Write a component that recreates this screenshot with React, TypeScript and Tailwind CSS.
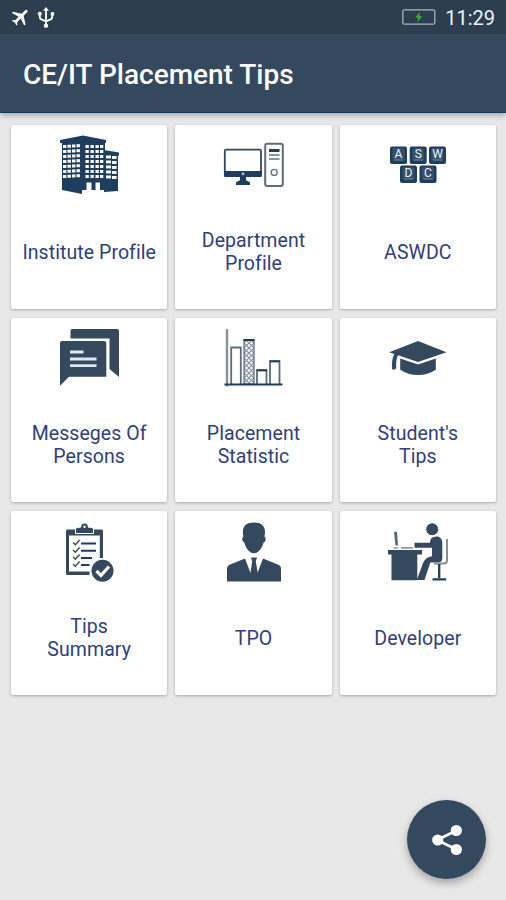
import type { ReactNode } from "react";

const NAVY = "#34495e";
const EDGE = "#1f3d5c";

function Building() {
  const rows = [20, 25, 30, 35, 40, 45, 50];
  return (
    <>
      <path d="M10 15 33 10.5 56 15v3H10z" fill={EDGE} />
      <path d="M12 17h20v52l-20-4z" fill={EDGE} />
      <path d="M31.5 17H55v48H31.5z" fill={EDGE} />
      <path d="M54 25l15 2.5v3h-1V66l-14 1z" fill={EDGE} />
      {rows.map((y) => (
        <g key={y} fill="#fff">
          {[13, 17.5, 22, 26.5].map((x) => (
            <rect key={x} x={x} y={y - (x - 13) * 0.06} width="3.4" height="3" />
          ))}
          {[35.5, 40.5, 45.5, 50].map((x) => (
            <rect key={x} x={x} y={y} width="3.3" height="3" />
          ))}
        </g>
      ))}
      {[31, 36, 41, 46, 51].map((y) => (
        <g key={y} fill="#fff">
          <rect x="56" y={y - 0.5} width="5" height="2.9" />
          <rect x="62" y={y} width="4.6" height="2.9" />
        </g>
      ))}
      <path d="M36.5 57.5h5V69h-5zM45.5 57.5H50V69h-4.5z" fill="#fff" />
    </>
  );
}

function Computer() {
  return (
    <>
      <rect x="10.8" y="24.6" width="36.2" height="26.4" rx="1.5" fill="#fff" stroke={NAVY} strokeWidth="1.8" />
      <path d="M10 46h38v4.5q0 1.5-1.5 1.5h-35Q10 52 10 50.5z" fill={EDGE} />
      <circle cx="29" cy="48.7" r="1.5" fill="#a5b5c5" />
      <path d="M26 52h6v3.2l4 2V60H22v-2.8l4-2z" fill={EDGE} />
      <rect x="51.2" y="18.8" width="17.6" height="42.2" rx="2" fill="#fff" stroke="#626a7b" strokeWidth="2" />
      <path d="M55 25.5h10.5" stroke={EDGE} strokeWidth="3" />
      <path d="M55 30h10.5M55 34h10.5" stroke="#8d959f" strokeWidth="2" />
      <circle cx="60.2" cy="47.4" r="3" fill="none" stroke="#667280" strokeWidth="1.4" />
    </>
  );
}

function Keyboard() {
  const keys = [
    ["A", 12, 21.5], ["S", 31.7, 21.5], ["W", 51, 21.5],
    ["D", 22, 40.5], ["C", 41.5, 40.5],
  ] as const;
  return (
    <>
      {keys.map(([letter, x, y]) => (
        <g key={letter}>
          <rect x={x} y={y} width="17" height="17.5" rx="2" fill={EDGE} />
          <rect x={x + 2.5} y={y + 1.5} width="12" height="12.5" rx="1.5" fill="#34506b" />
          <text x={x + 8.5} y={y + 11} textAnchor="middle" fontSize="12" fill="#eef4fa" className="font-[Roboto,sans-serif]">{letter}</text>
          <path d={`M${x + 4} ${y + 13.5}h9`} stroke="#8c9caf" strokeWidth=".8" />
        </g>
      ))}
    </>
  );
}

function Messages() {
  return (
    <>
      <path d="M22 11h45q2 0 2 2v46l-9.5-8V20.5H20.5V13q0-2 1.5-2z" fill={NAVY} />
      <path d="M12 23h42q2.3 0 2.3 2.3v33.5H19L10 67.7V25q0-2 2-2z" fill={NAVY} />
      <path d="M20 34h13.5M20 41h26.5M20 47.7h26.5" stroke="#dce8f4" strokeWidth="2.8" />
    </>
  );
}

function BarChart() {
  return (
    <>
      <defs>
        <pattern id="diamonds" width="5" height="5" patternUnits="userSpaceOnUse">
          <path d="M0 0l5 5M5 0L0 5" stroke="#8390a0" strokeWidth="1.2" />
        </pattern>
      </defs>
      <path d="M13 11v57.5" stroke="#8a929c" strokeWidth="2.5" />
      <path d="M17.2 66V29.5h9.6V66M43 66V52.5h9.5V66M56 66V43.5h9.5V66" fill="none" stroke="#5d6b7d" strokeWidth="1.8" />
      <path d="M30 22h10v44H30z" fill="url(#diamonds)" stroke="#53677b" strokeWidth="1.2" />
      <path d="M29.5 22h11M42.5 52.2h10.5M55.5 43.2H66" stroke={EDGE} strokeWidth="1.8" />
      <path d="M10.5 66.5h58" stroke={EDGE} strokeWidth="1.8" />
    </>
  );
}

function Cap() {
  return (
    <>
      <path d="M11.2 34.3 40 23l28.5 11.3L40 44 20 37.2Q17.8 41 18.2 49.5q0 2-2 2h-2Q13 43 16.2 35.9z" fill={NAVY} />
      <path d="M22.2 40.6 40 46.6l17.8-6v11.2Q50 57 40 57t-17.8-5.2z" fill={NAVY} />
    </>
  );
}

function Clipboard() {
  return (
    <>
      <path d="M17.5 18.5h34q1.5 0 1.5 1.5v27h-3.2V24.5H19v36h20.5v3.5h-22q-1.5 0-1.5-1.5V20q0-1.5 1.5-1.5z" fill={NAVY} />
      <path d="M25.5 22.5v-4q0-2.2 2.5-2.2h2.5q.5-4.3 4-4.3t4 4.3H41q2.5 0 2.5 2.2v4z" fill={NAVY} stroke="#fff" strokeWidth="1" />
      <circle cx="34.5" cy="15.7" r="1.2" fill="#fff" />
      {[32, 39.5, 46.5, 53.5].map((y) => (
        <path key={y} d={`m23 ${y - 0.5} 2.4 2.3 4.2-4.8`} fill="none" stroke={NAVY} strokeWidth="1.4" />
      ))}
      <path d="M31 32.5h15M31 39.8h15M31 47h11M31 54h8.5" stroke={EDGE} strokeWidth="2" />
      <circle cx="52.5" cy="59.7" r="12.5" fill="#fff" />
      <circle cx="52.5" cy="59.7" r="11" fill={NAVY} />
      <path d="m46.5 60 4.5 4.5 8-9" fill="none" stroke="#fff" strokeWidth="3.2" />
    </>
  );
}

function Businessman() {
  return (
    <>
      <path d="M40 11.5c7 0 11 3 11 9.5 0 2-.4 3.5-.4 5 1.6 0 1.3 5.2-1 5.5C48.2 37 44.5 42.3 40 42.3S31.6 37 30.3 31.5c-2.3-.3-2.6-5.5-1-5.5 0-1.5-.4-3-.4-5 0-6.5 4-9.5 11.1-9.5z" fill={NAVY} />
      <path d="M31 47.5 36.5 62h7L49 47.5 65 54q2 1 2 3.5V70.5H13V57.5Q13 55 15 54z" fill={NAVY} />
      <path d="M37 46.5h6l-1.2 4 2 11.5h-7.4l1.8-11.5z" fill={NAVY} />
    </>
  );
}

function DeskWorker() {
  return (
    <>
      <path d="M10 39h34v4.5h-4.7v25.8H13.5V43.5H10z" fill={NAVY} />
      <path d="m16 21 3-.3 1 13.8h-2.5z" fill="#54677a" />
      <path d="M15.5 37h4.8M23 36.8h12" stroke="#8e9aa7" strokeWidth="1.7" />
      <circle cx="54.2" cy="18.3" r="6" fill={NAVY} />
      <path d="M60 25.5q4.3 1.5 4.3 7V47q0 4.5-4.5 4.5h-7.5L46.5 69H38.8L45 52q2.3-5.7 9-6.8v-8.5H36.5v-5H52q0-7 8-6.2z" fill={NAVY} />
      <path d="M69 28v21.5q0 3-3 3H56" fill="none" stroke="#858e99" strokeWidth="2" />
      <path d="M61.2 53v14M54.5 68.3h13.7" stroke={EDGE} strokeWidth="2.3" />
    </>
  );
}

const tiles: { label: string[]; icon: ReactNode }[] = [
  { label: ["Institute Profile"], icon: <Building /> },
  { label: ["Department", "Profile"], icon: <Computer /> },
  { label: ["ASWDC"], icon: <Keyboard /> },
  { label: ["Messeges Of", "Persons"], icon: <Messages /> },
  { label: ["Placement", "Statistic"], icon: <BarChart /> },
  { label: ["Student's", "Tips"], icon: <Cap /> },
  { label: ["Tips", "Summary"], icon: <Clipboard /> },
  { label: ["TPO"], icon: <Businessman /> },
  { label: ["Developer"], icon: <DeskWorker /> },
];

function Tile({ label, icon }: { label: string[]; icon: ReactNode }) {
  return (
    <button className="flex h-[184.5px] flex-col items-center rounded-[2px] bg-white shadow-[0_1px_3px_rgba(0,0,0,0.28)]">
      <svg viewBox="0 0 80 80" className="ml-px size-20 shrink-0">{icon}</svg>
      <span className="flex h-[97px] flex-col items-center justify-center text-[19.5px] leading-[22.7px] tracking-[0.07px] whitespace-nowrap text-[#2f407c]">
        {label.map((line) => <span key={line}>{line}</span>)}
      </span>
    </button>
  );
}

export default function App() {
  return (
    <div className="relative h-[900px] w-[506px] overflow-hidden bg-[#e8e8e8] font-[Roboto,sans-serif]">
      <header className="h-[113px] border-b border-[#173a5c] bg-[#34495e] text-white shadow-[0_1px_7px_rgba(0,0,0,0.4)]">
        <div className="flex h-[34px] items-center bg-[#2c3e50] pr-[11px] pl-[10px]">
          <svg viewBox="0 0 24 24" className="size-[22px] rotate-45" fill="#fff">
            <path d="M21 16v-2l-8-5V3.5a1.5 1.5 0 0 0-3 0V9l-8 5v2l8-2.5V19l-2 1.5V22l3.5-1 3.5 1v-1.5L13 19v-5.5z" />
          </svg>
          <svg viewBox="0 0 20 24" className="ml-[4px] h-[23px] w-5" fill="none" stroke="#fff" strokeWidth="1.9">
            <path d="M10 4v17M3.5 8v3q0 3 3 3.5L10 16M16.5 8v3q0 3-3 3.5L10 16" />
            <path d="m10 1 3 4H7zM15 6.5h3.5v3.5H15z" fill="#fff" stroke="none" />
            <circle cx="3.5" cy="8" r="2.1" fill="#fff" stroke="none" />
            <circle cx="10" cy="20.5" r="2.3" fill="#fff" stroke="none" />
          </svg>
          <svg viewBox="0 0 34 16" className="ml-auto h-4 w-[34px]">
            <rect x=".8" y=".8" width="32" height="14.4" rx="1.5" fill="none" stroke="#a9b4bf" strokeWidth="1.3" />
            <path d="m18.3 2.5-5 6h3l-1.3 5 5-6.3h-3z" fill="#42b72a" />
          </svg>
          <span className="ml-[9px] pt-[2px] text-[20px] leading-6 text-[#eef2f6]">11:29</span>
        </div>
        <h1 className="flex h-[79px] items-center pt-[3px] pl-[23px] text-[28px] leading-8 font-medium">CE/IT Placement Tips</h1>
      </header>
      <main className="grid grid-cols-3 gap-x-2 gap-y-[8.5px] pt-[11.5px] pr-[10px] pl-[11px]">
        {tiles.map((tile) => <Tile key={tile.label.join(" ")} {...tile} />)}
      </main>
      <button aria-label="Share" className="absolute right-5 bottom-[21px] flex size-[79px] items-center justify-center rounded-full bg-[#34495e] shadow-[0_4px_8px_rgba(0,0,0,0.3)]">
        <svg viewBox="0 0 34 34" className="size-[34px]" fill="#fff">
          <path d="M26.5 7.5 7 17l19.5 9.5" fill="none" stroke="#fff" strokeWidth="2.6" />
          <circle cx="26.3" cy="7.5" r="5.6" />
          <circle cx="7.7" cy="17" r="5.6" />
          <circle cx="26.3" cy="26.5" r="5.6" />
        </svg>
      </button>
    </div>
  );
}
